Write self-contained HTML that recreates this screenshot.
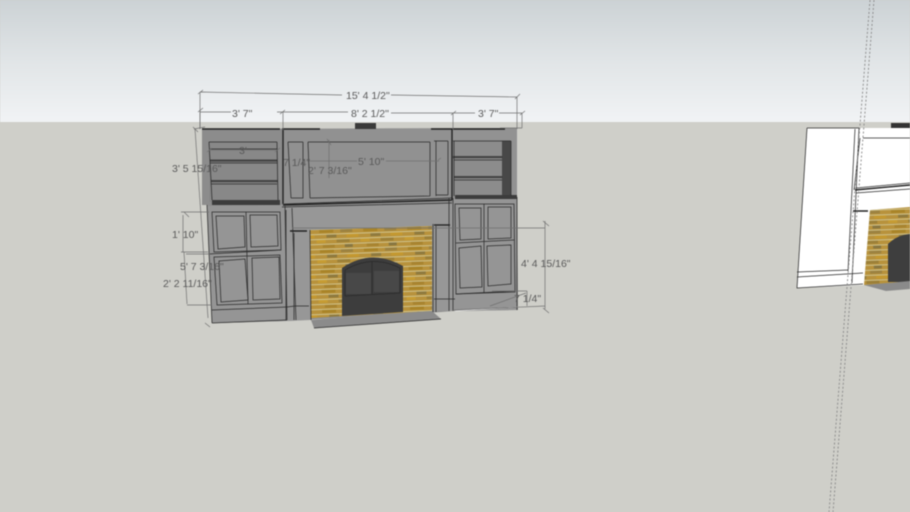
<!DOCTYPE html>
<html><head><meta charset="utf-8"><style>
html,body{margin:0;padding:0;width:910px;height:512px;overflow:hidden;background:#cfcfc9}
svg{display:block;filter:blur(.45px)}
text{font-family:"Liberation Sans",sans-serif;font-size:10.5px;fill:#5a5a5a}
.k{stroke:#2a2a2a;fill:none;stroke-width:.75}
.h{stroke:#222;fill:none;stroke-width:1.4}
.d{stroke:#707070;fill:none;stroke-width:.7}
</style></head><body>
<svg width="910" height="512" viewBox="0 0 910 512" xmlns="http://www.w3.org/2000/svg">
<defs>
<linearGradient id="sky" x1="0" y1="0" x2="0" y2="1"><stop offset="0" stop-color="#ccd2d5"/><stop offset=".5" stop-color="#e1e5e7"/><stop offset="1" stop-color="#f1f3f5"/></linearGradient>
<pattern id="brick" width="44" height="20" patternUnits="userSpaceOnUse" patternTransform="rotate(-2)">
<rect width="44" height="20" fill="#b8923c"/>
<rect x="3" y="1" width="14" height="3" fill="#a98428"/><rect x="24" y="1" width="12" height="3" fill="#9c8240"/>
<rect x="10" y="6" width="10" height="3" fill="#8f7a3e"/><rect x="30" y="6" width="12" height="3" fill="#c49830"/>
<rect x="0" y="11" width="9" height="3" fill="#c69c34"/><rect x="20" y="11" width="13" height="3" fill="#9c8038"/>
<rect x="6" y="16" width="12" height="3" fill="#a88430"/><rect x="28" y="16" width="8" height="3" fill="#887640"/>
<path d="M0 .5H44M0 5.5H44M0 10.5H44M0 15.5H44" stroke="#cfc28c" stroke-width=".9"/>
</pattern>
</defs>
<rect width="910" height="122" fill="url(#sky)"/>
<rect y="122" width="910" height="390" fill="#cfcfc9"/>

<!-- right copy -->
<polygon points="807,128 891,128 910,128 910,208 870,210 864,285 797,288" fill="#fff"/>
<rect x="891" y="123" width="19" height="5" fill="#333"/>
<polygon points="870,210 910,207 910,282 864,285" fill="url(#brick)"/>
<path d="M888,282 V244 Q897,235 910,234 V282Z" fill="#3e3e3e"/>
<polygon points="864,285 910,281 910,289 886,291" fill="#8a8a8a"/>
<path class="k" d="M807,128 H859 M807,128 L797,288 L863,284 M859,128 L852,283 M855,129 L848,271 M863,138 H910 M856,188 L910,183 M856,193 L910,189 M797,272 L848,270 M797,277 L863,273 M860,138 L854,190"/>
<path class="h" d="M855,190 L910,185 M853,211 H868"/>

<!-- dotted -->
<path d="M870,0 L829,512 M874,0 L833,512" stroke="#888" stroke-width=".9" stroke-dasharray="2 2" fill="none"/>

<!-- main body -->
<polygon points="202,129 517,128 517,198 518,310 453,311 441,312 287,321 212,323 207,205 202,204" fill="#8d8d8d"/>
<rect x="355" y="123" width="21" height="7" fill="#3a3a3a"/>
<polygon points="207,206 287,205 287,321 212,323" fill="#959595"/>
<polygon points="284,206 453,202 453,311 432,311 432,226 310,230 310,320 287,321" fill="#979797"/>
<polygon points="453,198 517,197 518,310 453,311" fill="#959595"/>
<polygon points="282,129 452,129 452,200 283,204" fill="#919191"/>
<polygon points="202,129 282,129 282,205 202,205" fill="#8c8c8c"/>
<polygon points="452,129 517,129 517,198 452,198" fill="#929292"/>
<!-- shelves left -->
<rect x="209" y="142" width="68" height="60" fill="#888"/>
<rect x="210" y="159.500" width="67" height="2.200" fill="#444"/>
<rect x="211" y="180" width="67" height="2.200" fill="#444"/>
<rect x="212" y="200" width="68" height="5" fill="#3c3c3c"/>
<path class="k" d="M209,142 H277 M209,142 L212,200 M277,142 L278,200 M210,149 H277 M210,163 H277 M211,184 H277"/>
<!-- shelves right -->
<rect x="454" y="141" width="57" height="56" fill="#8c8c8c"/>
<rect x="502" y="141" width="9" height="55" fill="#484848"/>
<rect x="453" y="156" width="50" height="2.200" fill="#444"/>
<rect x="454" y="176" width="49" height="2.200" fill="#444"/>
<rect x="455" y="195" width="62" height="4" fill="#3c3c3c"/>
<path class="k" d="M453,141 H511 M454,141 V196 M511,141 V196 M454,160 H502 M454,180 H502"/>
<!-- upper center -->
<path class="k" d="M288,142 L291,198 M303,142 H288 M303,142 V198 L291,198 M308,142 L310,198 M308,142 H430 M430,142 V196 M310,198 L430,196 M434,141 H448 M436,141 V196 M448,141 V195 M436,195 L448,195 M284,204 L452,198"/>
<path class="h" d="M202,129 H280 M282,129 H320 M431,129 H505 M283,130 V204 M452,129 V200 M283,205 L452,200"/>
<path class="k" d="M282,207 L452,203 M286,210 V320 M292,208 L296,320"/>
<!-- left cabinet panels -->
<path class="k" d="M207,205 L212,323 M212,310 L287,307 M212,323 L287,320"/>
<path class="k" d="M212,212 H280 L281,250 L214,252 Z M214,257 L280,255 L282,303 L217,305 Z M246,212 L248,304"/>
<path class="k" d="M216,216 H244 L245,247 L218,249 Z M250,215 H277 L278,246 L251,247 Z M219,261 L245,259 L248,300 L221,302 Z M252,258 L279,257 L280,299 L253,300 Z"/>
<path class="k" d="M209,254 L281,250"/>
<!-- center frame -->
<path class="k" d="M285,206 L287,320 M295,306 H309 M287,307 L295,306 M294,233 V320"/>
<path class="h" d="M290,231 H307"/>
<!-- brick -->
<polygon points="310,230 432,226 432,311 311,318" fill="url(#brick)"/>
<path d="M342,316 V268 Q371,248 403,266 V312 Z" fill="#3d3d3d"/>
<rect x="346" y="273" width="25" height="21" fill="#484848"/><rect x="374" y="271" width="25" height="21" fill="#484848"/>
<path d="M345,270 Q372,254 400,268 V293 L345,296 Z M372,261 V294" fill="none" stroke="#2a2a2a" stroke-width=".7"/>
<polygon points="311,320 432,311 441,319 314,328" fill="#8b8b8b"/>
<path class="k" d="M310,230 L311,320 M314,328 L441,319"/>
<!-- right of brick -->
<path class="k" d="M433,224 V312 M436,226 V312 M434,299 H455 M449,198 V311 M453,198 V311"/>
<path class="h" d="M434,225 H450"/>
<!-- right cabinet panels -->
<path class="k" d="M455,204 H514 L515,292 L456,294 Z M484,204 V293 M456,243 L514,240"/>
<path class="k" d="M459,208 H481 V239 L460,240 Z M488,207 H511 V238 L488,239 Z M459,248 L481,246 L482,287 L460,288 Z M487,246 L511,245 V284 L488,286 Z"/>
<path class="k" d="M456,294 L515,291 M517,197 V310"/>
<path d="M455,311 L518,307" stroke="#fff" stroke-width=".6" fill="none"/>

<!-- dimensions -->
<g class="d">
<path d="M200,92 V129 M198,94 L203,90 M200,92 L342,95 M391,95 L517,97 M515,99 L520,94 M517,97 V129"/>
<path d="M200,110 V129 M198,112 L203,108 M200,112 H231 M277,112 H282 M280,114 L285,110 M283,112 V130 M282,112 H348 M391,113 H453 M451,115 L456,111 M453,113 V130 M453,113 H475 M499,113 H522 M520,115 L525,111 M522,113 V128 M500,128 H522"/>
<path d="M194,129 L205,127 M195,129 L208,318 M193,127 L198,132 M205,323 L210,327"/>
<path d="M209,150 H276 M207,152 L212,148 M275,152 L280,148 M327,139 L331,145 M329,140 V178 M310,161 H357 M386,161 H439 M438,160 L441,158"/>
<path d="M181,212 H209 M183,215 V252 M181,252 L208,252 M184,252 L187,304 M186,254 H210 M187,305 H212 M184,212 L189,217"/>
<path d="M292,228 H545 M545,221 V309 M543,221 L549,226 M543,308 L549,313 M453,310 L545,306 M490,306 L526,293 M492,291 H527 M527,291 V306"/>
</g>
<g>
<text x="346" y="99">15' 4 1/2"</text>
<text x="232" y="117">3' 7"</text>
<text x="351" y="117">8' 2 1/2"</text>
<text x="478" y="117">3' 7"</text>
<text x="172" y="172">3' 5 15/16"</text>
<text x="239" y="154">3'</text>
<text x="283" y="166">7 1/4"</text>
<text x="308" y="174">2' 7 3/16"</text>
<text x="358" y="165">5' 10"</text>
<text x="172" y="238">1' 10"</text>
<text x="180" y="270">5' 7 3/16"</text>
<text x="163" y="287">2' 2 11/16"</text>
<text x="521" y="267">4' 4 15/16"</text>
<text x="514" y="302">7 1/4"</text>
</g>
</svg>
</body></html>
